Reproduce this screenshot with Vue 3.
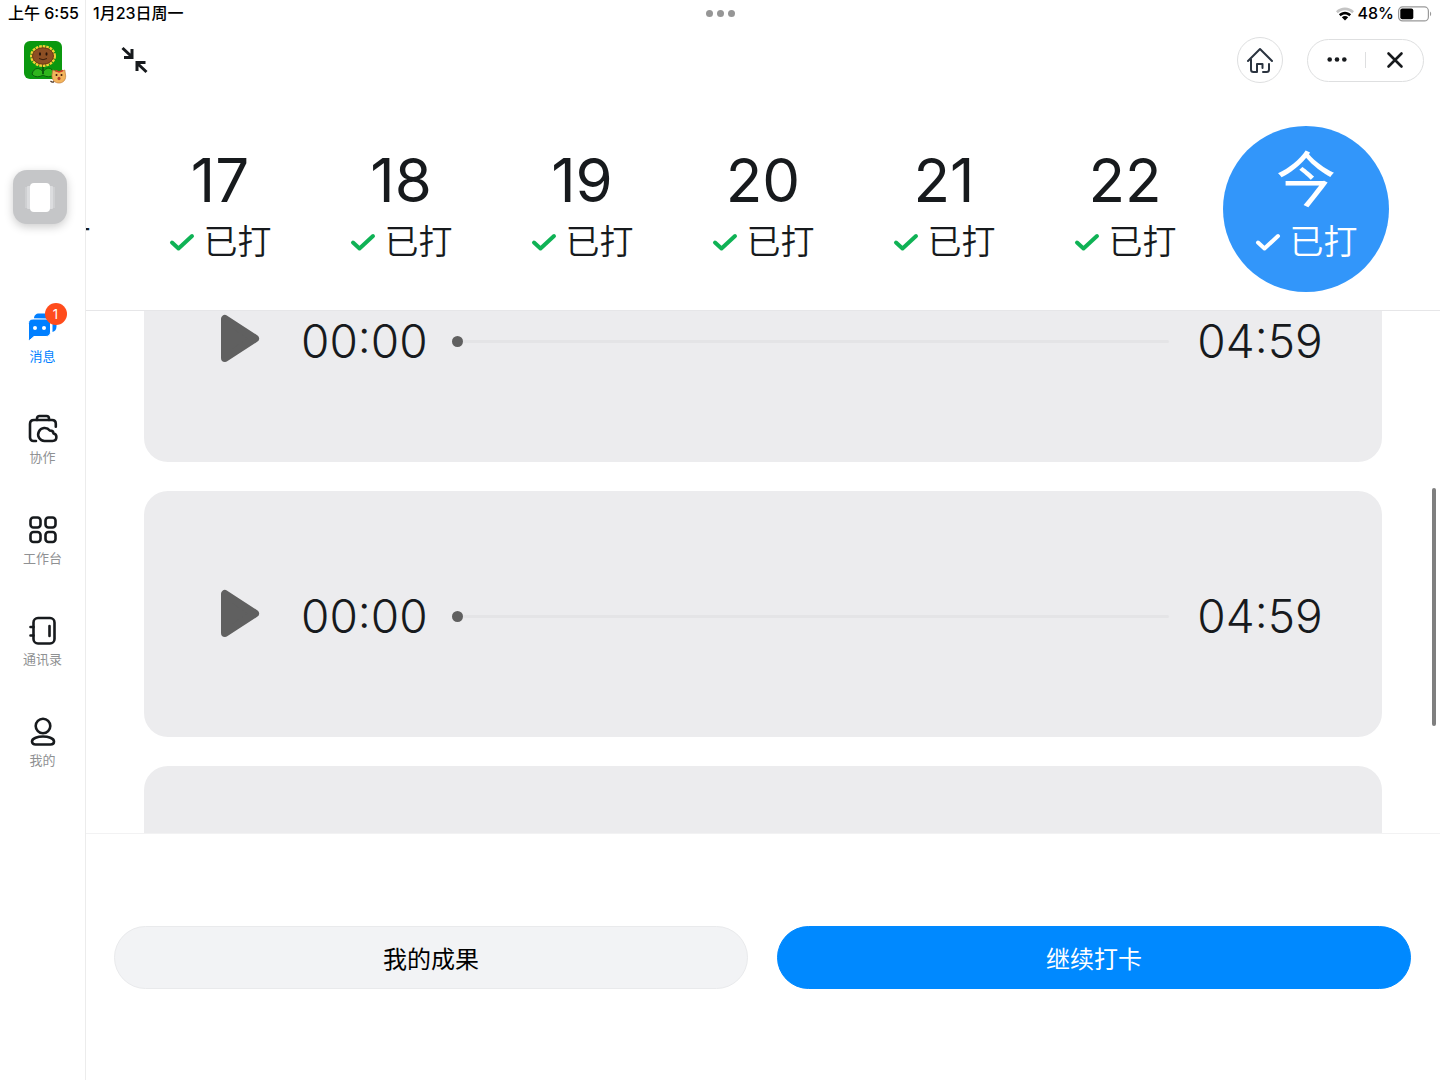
<template>
  <div class="app">
    <!-- Left navigation -->
    <aside class="sidebar">
      <div class="status status-left">上午 6:55</div>

      <svg class="avatar" viewBox="0 0 44 46" aria-hidden="true">
        <rect x="0" y="0" width="38" height="38" rx="6" fill="#0b980f" />
        <path d="M8 33c2-7 8-7 11-2 3-5 9-6 11 2-3 4-8 3-11 1-3 2-8 3-11-1z" fill="#2fb51d" stroke="#0b5c0c" stroke-width="1" />
        <path d="M19 23v10" stroke="#0b5c0c" stroke-width="2" />
        <ellipse cx="19" cy="15" rx="11.5" ry="9.5" fill="#8a5a12" stroke="#f3cf35" stroke-width="3" stroke-dasharray="2.6 0.9" />
        <ellipse cx="19" cy="15" rx="10.5" ry="8.2" fill="#8d4f24" stroke="#6b3a15" stroke-width="1" />
        <ellipse cx="16" cy="13" rx="1" ry="1.8" fill="#26130a" />
        <ellipse cx="22.5" cy="13" rx="1" ry="1.8" fill="#26130a" />
        <path d="M15 17.5q4 2.5 8 0" fill="none" stroke="#3b1c0b" stroke-width="1" />
        <path d="M30 40.500q-1.500 1.500-3.500-.5" fill="none" stroke="#4a3322" stroke-width="1.200" />
        <path d="M28 34l.8-5 3.500 1.500h4.500l4-1.500.9 6c0 4.500-3 7-6.700 7S28 39.500 28 35z" fill="#f3b45c" stroke="#c07a38" stroke-width=".7" />
        <path d="M31.500 29.500l3.500 1.500 4-1.500" fill="none" stroke="#d33a26" stroke-width="1.500" />
        <circle cx="32.500" cy="34" r="1" fill="#3b1c0b" />
        <circle cx="37.500" cy="34" r="1" fill="#3b1c0b" />
        <ellipse cx="35" cy="37.500" rx="1.500" ry="1.800" fill="#b3402a" />
      </svg>

      <nav class="nav">
        <button
          v-for="item in navItems"
          :key="item.key"
          class="nav-item"
          :class="{ active: activeNav === item.key }"
          @click="activeNav = item.key"
        >
          <span class="nav-icon">
            <svg v-if="item.key === 'message'" viewBox="0 0 30 30">
              <path d="M6 6.500C6 3.500 8 1.500 11 1.500H23c3.500 0 5.500 2 5.500 5.500v7.500c0 3-1.500 5-4 5.500V12c0-3-2-5-5-5z" fill="#007fff" />
              <path d="M5 7h13c2.800 0 4.500 1.700 4.500 4.500v8.500c0 2.800-1.700 4.500-4.500 4.500H6L2 28c-.8.600-1.500.2-1.500-.8V11.500C.5 8.700 2.200 7 5 7z" fill="#007fff" stroke="#fff" stroke-width="1" />
              <circle cx="7" cy="16" r="2" fill="#fff" />
              <circle cx="16" cy="16" r="2" fill="#fff" />
            </svg>
            <svg v-else-if="item.key === 'collab'" viewBox="0 0 30 30" class="line">
              <path d="M9 7V5.500C9 4 10 3 11.500 3h7C20 3 21 4 21 5.500V7" />
              <path d="M8 28H5.500C3.500 28 2 26.500 2 24.500V11c0-2.500 1.500-4 4-4h18c2.500 0 3.800 1.500 3.800 3.800v3" />
              <path d="M16.500 28a6.500 6.500 0 1 1 5.300-10.500c2.300 0 3.700 1.200 3.700 3 1.800.3 2.900 1.700 2.900 3.600 0 2.300-1.600 3.900-3.900 3.900z" />
            </svg>
            <svg v-else-if="item.key === 'work'" viewBox="0 0 30 30" class="line">
              <rect x="2.500" y="3.500" width="10" height="10" rx="3" />
              <rect x="17.500" y="3.500" width="10" height="10" rx="3" />
              <rect x="2.500" y="18" width="10" height="10" rx="3" />
              <rect x="17.500" y="18" width="10" height="10" rx="3" />
            </svg>
            <svg v-else-if="item.key === 'contacts'" viewBox="0 0 30 30" class="line">
              <rect x="5.500" y="3" width="21" height="25.500" rx="4.500" />
              <path d="M2.500 12h3M2.500 20.500h3M21.500 11v10" />
            </svg>
            <svg v-else viewBox="0 0 30 30" class="line">
              <circle cx="15" cy="10" r="7.300" />
              <path d="M15 20.500c5 0 11 1.500 11 5 0 2-1.500 3-3.500 3h-15c-2 0-3.500-1-3.500-3 0-3.500 6-5 11-5z" />
            </svg>
            <span v-if="item.badge" class="badge">{{ item.badge }}</span>
          </span>
          <span class="nav-label">{{ item.label }}</span>
        </button>
      </nav>

      <button class="assist" aria-label="AssistiveTouch"><span></span></button>
    </aside>

    <main class="main">
      <header class="header">
        <div class="status status-main">
          <span class="status-date">1月23日周一</span>
          <span class="dots"><i></i><i></i><i></i></span>
          <span class="status-right">
            <svg class="wifi" viewBox="0 0 18 14">
              <path d="M0 4.200C5-.7 13-.7 18 4.200l-1.800 2C12 2.200 6 2.200 1.800 6.200z" fill="#c4c4c4" />
              <path d="M2.900 7.300c3.500-3.400 8.700-3.400 12.200 0l-1.800 2c-2.500-2.300-6.100-2.300-8.600 0z" fill="#000" />
              <path d="M5.800 10.300c1.900-1.700 4.500-1.700 6.400 0L9 13.600z" fill="#000" />
            </svg>
            <span>48%</span>
            <svg class="battery" viewBox="0 0 34 16">
              <rect x=".6" y=".9" width="29.800" height="14" rx="4" fill="none" stroke="#999" stroke-width="1.200" />
              <rect x="2.300" y="2.600" width="13" height="10.600" rx="2" fill="#000" />
              <path d="M32 5.500c1.600.8 1.600 4 0 4.800z" fill="#999" />
            </svg>
          </span>
        </div>

        <div class="toolbar">
          <button class="icon-btn collapse" aria-label="收起">
            <svg viewBox="0 0 28 28">
              <path d="M2.500 2l9 8.500M12 3v8.500H4M26.500 26l-9-8.500M17 25v-8.500h8.500" />
            </svg>
          </button>
          <div class="tools">
            <button class="icon-btn home" aria-label="首页">
              <svg viewBox="0 0 28 28">
                <path d="M2 15L14 3l12 12" />
                <path d="M5 13.500v10c0 1.500 1 2.500 2.500 2.500H11v-8h5.500v4M23 18v5.500c0 1.500-1 2.500-2.500 2.500H17" />
              </svg>
            </button>
            <div class="capsule">
              <button class="icon-btn" aria-label="更多">
                <svg class="more" viewBox="0 0 20 20">
                  <circle cx="2.700" cy="9.500" r="2.300" />
                  <circle cx="10" cy="9.500" r="2.300" />
                  <circle cx="17.300" cy="9.500" r="2.300" />
                </svg>
              </button>
              <span class="divider"></span>
              <button class="icon-btn" aria-label="关闭">
                <svg class="close" viewBox="0 0 20 20"><path d="M3.500 3.500l13 13M16.500 3.500l-13 13" /></svg>
              </button>
            </div>
          </div>
        </div>

        <div class="days">
          <button
            v-for="day in days"
            :key="day"
            class="day"
            :class="{ today: day === '今' }"
          >
            <span class="day-num">{{ day }}</span>
            <span class="day-state">
              <svg viewBox="0 0 26 20"><path d="M3 10.500l6.500 6L23 4" /></svg>
              已打
            </span>
          </button>
        </div>
      </header>

      <!-- Recordings -->
      <section ref="listRef" class="list">
        <article v-for="audio in audios" :key="audio.id" class="card">
          <button class="play" aria-label="播放">
            <svg viewBox="0 0 40 50">
              <path d="M5 5v39L35 24.500z" />
            </svg>
          </button>
          <span class="time">{{ audio.current }}</span>
          <input v-model="audio.progress" class="track" type="range" min="0" max="299" aria-label="播放进度" />
          <span class="time">{{ audio.total }}</span>
        </article>
      </section>
      <div class="scroll-thumb"></div>

      <footer class="footer">
        <button class="btn">我的成果</button>
        <button class="btn primary">继续打卡</button>
      </footer>
    </main>
  </div>
</template>

<script setup>
import { ref, onMounted } from 'vue';

const activeNav = ref('message');

const navItems = [
  { key: 'message', label: '消息', badge: 1 },
  { key: 'collab', label: '协作' },
  { key: 'work', label: '工作台' },
  { key: 'contacts', label: '通讯录' },
  { key: 'me', label: '我的' }
];

const days = ['16', '17', '18', '19', '20', '21', '22', '今'];

const audios = ref([
  { id: 1, current: '00:00', total: '04:59', progress: 0 },
  { id: 2, current: '00:00', total: '04:59', progress: 0 },
  { id: 3, current: '00:00', total: '04:59', progress: 0 }
]);

const listRef = ref(null);

// Start partway down the list
onMounted(() => {
  listRef.value.scrollTop = 95;
});
</script>

<style>
body {
  margin: 0;
  background: #fff;
}
</style>

<style scoped>
.app {
  display: flex;
  height: 100vh;
  background: #fff;
  color: #171a1d;
  font-family: Inter, "Noto Sans CJK SC", sans-serif;
}

button {
  border: none;
  padding: 0;
  background: none;
  color: inherit;
  font-family: inherit;
  cursor: pointer;
}

svg {
  display: block;
}

.status {
  height: 27px;
  line-height: 27px;
  font-size: 16px;
  font-weight: 500;
  color: #000;
  white-space: nowrap;
}

/* Sidebar */
.sidebar {
  position: relative;
  flex: none;
  width: 86px;
  box-sizing: border-box;
  border-right: 1px solid #ececec;
}

.status-left {
  padding-left: 8px;
}

.avatar {
  width: 44px;
  height: 46px;
  margin: 14px 0 0 24px;
}

.nav {
  display: flex;
  flex-direction: column;
  margin-top: 225px;
}

.nav-item {
  display: flex;
  flex-direction: column;
  align-items: center;
  height: 101px;
  color: #8f9193;
}

.nav-item.active {
  color: #007fff;
}

.nav-icon {
  position: relative;
  width: 30px;
  height: 30px;
}

.line {
  fill: none;
  stroke: #171a1d;
  stroke-width: 2.6;
  stroke-linecap: round;
  stroke-linejoin: round;
}

.nav-label {
  margin-top: 4px;
  font-size: 13px;
  line-height: 20px;
}

.badge {
  position: absolute;
  top: -9px;
  right: -9px;
  width: 22px;
  height: 22px;
  border-radius: 50%;
  background: #ff4c1c;
  color: #fff;
  font-size: 13px;
  line-height: 22px;
  text-align: center;
}

.assist {
  position: absolute;
  top: 170px;
  left: 13px;
  display: flex;
  align-items: center;
  justify-content: center;
  width: 54px;
  height: 54px;
  border-radius: 14px;
  background: #c5c6c8;
  box-shadow: 0 3px 10px rgba(0, 0, 0, 0.2);
}

.assist span {
  width: 20px;
  height: 29px;
  border-radius: 4px;
  background: #fff;
  box-shadow: -6px 0 0 -3px #dcdddf, 6px 0 0 -3px #dcdddf, -9px 0 0 -4px #cfd0d2, 9px 0 0 -4px #cfd0d2;
}

/* Main area */
.main {
  position: relative;
  display: flex;
  flex: 1;
  flex-direction: column;
  min-width: 0;
}

.header {
  flex: none;
  border-bottom: 1px solid #e6e6e8;
}

.status-main {
  display: flex;
  align-items: center;
  justify-content: space-between;
  padding: 0 8px 0 7px;
}

.dots {
  position: absolute;
  left: calc(50vw - 100px);
  display: flex;
  gap: 4px;
}

.dots i {
  width: 7px;
  height: 7px;
  border-radius: 50%;
  background: #969696;
}

.status-right {
  display: flex;
  align-items: center;
  gap: 4px;
}

.wifi {
  width: 18px;
  height: 14px;
}

.battery {
  width: 34px;
  height: 16px;
}

.toolbar {
  display: flex;
  align-items: center;
  justify-content: space-between;
  height: 66px;
  padding: 0 16px 0 34px;
}

.icon-btn {
  display: flex;
  align-items: center;
  justify-content: center;
}

.icon-btn svg {
  width: 28px;
  height: 28px;
  fill: none;
  stroke: #171a1d;
  stroke-width: 3;
}

.tools {
  display: flex;
  align-items: center;
  gap: 24px;
}

.home {
  width: 46px;
  height: 46px;
  box-sizing: border-box;
  border: 1px solid #dedfe0;
  border-radius: 50%;
}

.home svg {
  stroke: #2b3440;
  stroke-width: 2;
  stroke-linecap: round;
  stroke-linejoin: round;
}

.capsule {
  display: flex;
  align-items: center;
  width: 117px;
  height: 43px;
  box-sizing: border-box;
  border: 1px solid #dedfe0;
  border-radius: 22px;
}

.capsule .icon-btn {
  flex: 1;
}

.capsule svg {
  width: 20px;
  height: 20px;
}

.capsule .more {
  fill: #171a1d;
  stroke: none;
}

.capsule .close {
  stroke-width: 2.6;
  stroke-linecap: round;
}

.divider {
  width: 1px;
  height: 16px;
  background: #dedfe0;
}

.days {
  display: flex;
  justify-content: flex-end;
  gap: 15px;
  padding: 33px 51px 18px 0;
  overflow: hidden;
}

.day {
  display: flex;
  flex: none;
  flex-direction: column;
  align-items: center;
  width: 166px;
  height: 166px;
  box-sizing: border-box;
  padding-top: 22px;
  border-radius: 50%;
}

.day.today {
  background: #3296fa;
  color: #fff;
}

.day-num {
  font-size: 60px;
  line-height: 64px;
}

.day-state {
  display: flex;
  align-items: center;
  gap: 9px;
  margin-top: 5px;
  font-size: 34px;
  font-weight: 350;
  line-height: 50px;
}

.day-state svg {
  width: 26px;
  height: 20px;
  fill: none;
  stroke: #0fb255;
  stroke-width: 4;
  stroke-linecap: round;
  stroke-linejoin: round;
}

.today .day-state svg {
  stroke: #fff;
}

.list {
  display: flex;
  flex: 1;
  flex-direction: column;
  gap: 29px;
  min-height: 0;
  padding: 0 58px;
  overflow-y: auto;
  scrollbar-width: none;
}

.card {
  display: flex;
  flex: none;
  align-items: center;
  height: 246px;
  box-sizing: border-box;
  padding: 0 59px 0 76px;
  border-radius: 24px;
  background: #ececee;
}

.play svg {
  width: 40px;
  height: 50px;
  fill: #606060;
  stroke: #606060;
  stroke-width: 8;
  stroke-linejoin: round;
}

.time {
  width: 126px;
  margin-top: 4px;
  font-size: 46px;
  font-weight: 300;
  line-height: 50px;
  text-align: center;
  white-space: nowrap;
}

.play + .time {
  margin-left: 41px;
}

.track {
  flex: 1;
  min-width: 0;
  height: 11px;
  margin: 4px 28px 0 25px;
  appearance: none;
  background: transparent;
}

.track::-webkit-slider-runnable-track {
  height: 3px;
  border-radius: 2px;
  background: #e4e4e6;
}

.track::-webkit-slider-thumb {
  width: 11px;
  height: 11px;
  margin-top: -4px;
  appearance: none;
  border-radius: 50%;
  background: #606060;
}

.scroll-thumb {
  position: absolute;
  top: 488px;
  right: 4px;
  width: 4px;
  height: 238px;
  border-radius: 2px;
  background: #7f7f7f;
}

.footer {
  display: flex;
  flex: none;
  gap: 29px;
  padding: 92px 29px 91px 28px;
  border-top: 1px solid #f2f2f3;
}

.btn {
  flex: 1;
  height: 63px;
  border: 1px solid #e9eaec;
  border-radius: 32px;
  background: #f2f3f5;
  color: #000;
  font-size: 24px;
}

.btn.primary {
  border-color: #0089ff;
  background: #0089ff;
  color: #fff;
}
</style>
